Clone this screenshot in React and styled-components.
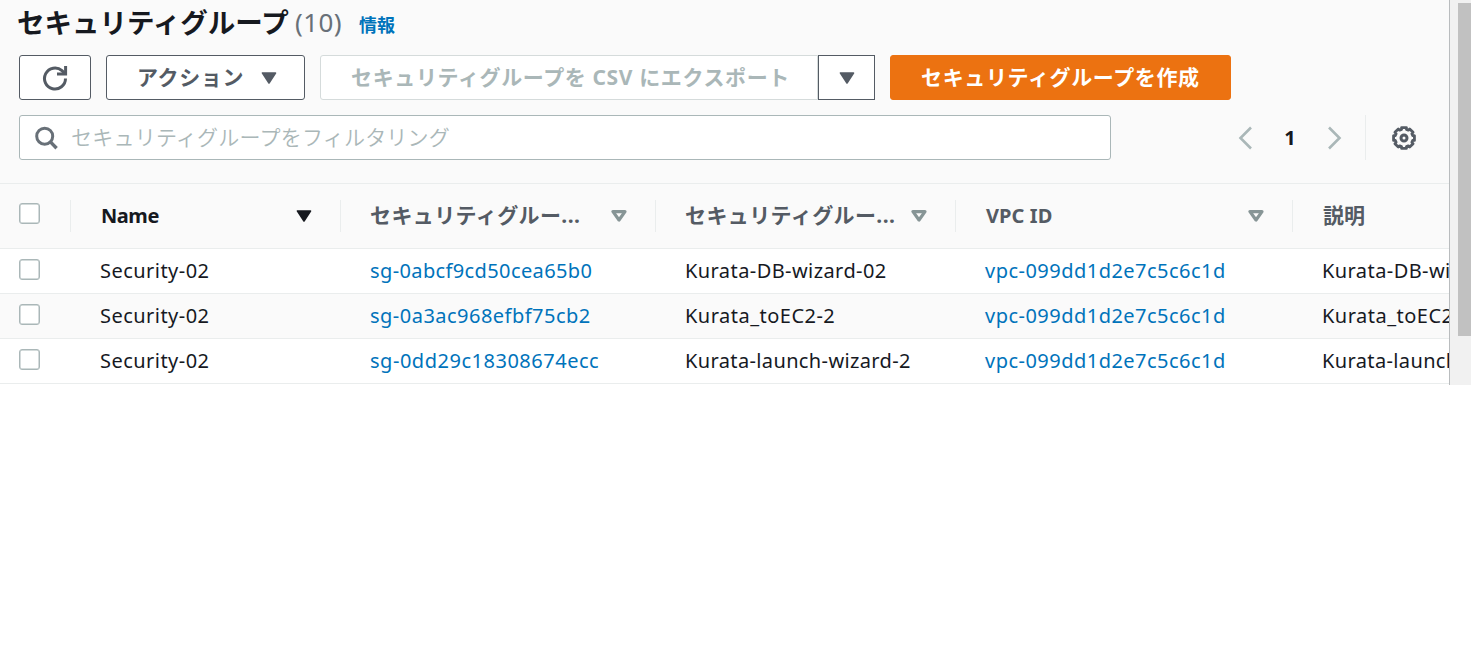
import React from "react";
import styled, { createGlobalStyle } from "styled-components";

const GlobalStyle = createGlobalStyle`
  *, *::before, *::after { box-sizing: border-box; }
  body {
    margin: 0;
    background: #fff;
    color: #16191f;
    font-family: "Noto Sans", "Noto Sans CJK JP", sans-serif;
    font-size: 20px;
    line-height: 30px;
    overflow: hidden;
  }
`;

const Viewport = styled.div`
  display: flex;
  width: 1471px;
  height: 385px;
  overflow: hidden;
`;

const Panel = styled.main`
  display: flex;
  flex-direction: column;
  width: 1450px;
  height: 385px;
  flex: none;
  overflow: hidden;
  background: #fff;
  border-right: 1px solid #b9bcbe;
`;

const Scrollbar = styled.div`
  width: 21px;
  height: 385px;
  padding: 3px 0 0 8px;
  background: #f1f1f1;
`;

const Thumb = styled.div`
  width: 13px;
  height: 333px;
  background: #c1c1c1;
`;

const PanelHeader = styled.header`
  display: flex;
  flex-direction: column;
  flex: none;
  height: 184px;
  padding: 0 19px;
  background: #fafafa;
  border-bottom: 1px solid #eaeded;
`;

const TitleRow = styled.div`
  display: flex;
  height: 55px;
  white-space: nowrap;
`;

const Title = styled.h1`
  margin: 0 0 0 -2px;
  width: 278px;
  padding-top: 1px;
  font: 700 27.5px/40px "Noto Sans CJK JP", sans-serif;
`;

const Count = styled.span`
  width: 64px;
  padding-top: 2px;
  color: #687078;
  font-size: 26px;
  line-height: 40px;
  letter-spacing: 0.4px;
`;

const InfoLink = styled.a`
  padding-top: 9px;
  color: #0073bb;
  font: 700 18px/30px "Noto Sans CJK JP", sans-serif;
`;

const ButtonRow = styled.div`
  display: flex;
  height: 60px;
  gap: 15px;
`;

const Button = styled.button`
  display: flex;
  align-items: center;
  justify-content: ${(p) => (p.$center ? "center" : "flex-start")};
  flex: none;
  gap: 17px;
  width: ${(p) => p.$width}px;
  height: 45px;
  margin: 0;
  padding: 0 0 0 ${(p) => (p.$center ? 0 : 30)}px;
  border: 1px solid ${(p) => (p.$primary ? "#ec7211" : p.$disabled ? "#d5dbdb" : "#545b64")};
  border-radius: ${(p) => p.$radius ?? "3px"};
  background: ${(p) => (p.$primary ? "#ec7211" : "#fff")};
  color: ${(p) => (p.$primary ? "#fff" : p.$disabled ? "#aab7b8" : "#545b64")};
  font: 700 21px/30px "Noto Sans", "Noto Sans CJK JP", sans-serif;
  letter-spacing: 0.63px;
  white-space: nowrap;
`;

const ButtonLabel = styled.span`
  padding-bottom: 2px;
`;

const SplitButton = styled.div`
  display: flex;
`;

const ToolRow = styled.div`
  display: flex;
  align-items: center;
  height: 45px;
`;

const SearchBox = styled.div`
  display: flex;
  align-items: center;
  gap: 13px;
  width: 1092px;
  height: 45px;
  padding-left: 15px;
  background: #fff;
  border: 1px solid #aab7b8;
  border-radius: 3px;
`;

const Placeholder = styled.span`
  padding-bottom: 4px;
  color: #aab7b8;
  font: 350 21px/30px "Noto Sans CJK JP", sans-serif;
  letter-spacing: 0.22px;
`;

const Pagination = styled.nav`
  display: flex;
  align-items: center;
  justify-content: space-between;
  width: 104px;
  margin-left: 127px;
`;

const PageNumber = styled.span`
  font-weight: 700;
  font-size: 20px;
`;

const Settings = styled.div`
  display: flex;
  align-items: center;
  height: 45px;
  margin-left: 23px;
  padding-left: 25px;
  border-left: 1px solid #eaeded;
`;

const Row = styled.div`
  display: grid;
  grid-template-columns: 71px 270px 315px 300px 337px 156px;
  align-items: center;
  flex: none;
  height: ${(p) => (p.$head ? 65 : 45)}px;
  background: ${(p) => (p.$shaded ? "#fafafa" : "#fff")};
  border-bottom: 1px solid #eaeded;
`;

const CheckCell = styled.div`
  display: flex;
  align-items: center;
  height: 32px;
  padding: 0 0 ${(p) => (p.$head ? 5 : 3)}px 19px;
  border-right: 1px solid ${(p) => (p.$head ? "#eaeded" : "transparent")};
`;

const Checkbox = styled.span`
  width: 21px;
  height: 21px;
  border: 1.5px solid #aab7b8;
  border-radius: 3px;
  background: #fff;
  box-shadow: inset 0 0 0 0.5px #aab7b8;
`;

const HeadCell = styled.div`
  display: flex;
  align-items: center;
  justify-content: space-between;
  height: 32px;
  padding: 0 28px 0 ${(p) => (p.$latin ? 30 : 29)}px;
  color: ${(p) => (p.$active ? "#16191f" : "#545b64")};
  border-right: 1px solid ${(p) => (p.$last ? "transparent" : "#eaeded")};
  font-weight: 700;
  white-space: nowrap;
`;

const HeadLabel = styled.span`
  padding-bottom: ${(p) => (p.$latin ? 0 : 3)}px;
  font-size: ${(p) => (p.$latin ? 20 : 21)}px;
  letter-spacing: ${(p) => p.$track ?? 0.4}px;
`;

const Cell = styled.div`
  padding-left: 29px;
  color: ${(p) => (p.$link ? "#0073bb" : "#16191f")};
  font-size: 20px;
  letter-spacing: ${(p) => p.$track}px;
  white-space: nowrap;
`;

const Icon = styled.svg`
  display: block;
  flex: none;
`;

const Caret = ({ hollow, color }) => (
  <Icon width="16" height="12" viewBox="0 0 16 12">
    {hollow ? (
      <path d="M2 1.6h12L8 10z" fill="none" stroke={color} strokeWidth="3.2" strokeLinejoin="round" />
    ) : (
      <path d="M1.5 1h13L8 11z" fill={color} stroke={color} strokeWidth="1.6" strokeLinejoin="round" />
    )}
  </Icon>
);

const RefreshIcon = () => (
  <Icon width="26" height="26" viewBox="0 0 26 26" fill="none" stroke="#545b64" strokeWidth="3">
    <path d="M23.5 13.5A10.5 10.5 0 1 1 20 5.7L22.6 8.3" />
    <path d="M23.6 1v8h-8.6" />
  </Icon>
);

const SearchIcon = () => (
  <Icon width="23" height="25" viewBox="0 0 23 25" fill="none" stroke="#687078" strokeWidth="3">
    <circle cx="9.7" cy="11.2" r="8" />
    <path d="M15.4 16.9l6.2 6.4" strokeWidth="3.4" />
  </Icon>
);

const Chevron = ({ d }) => (
  <Icon width="15" height="24" viewBox="0 0 15 24" fill="none" stroke="#aab7b8" strokeWidth="2.6">
    <path d={d} />
  </Icon>
);

const gearOutline = Array.from({ length: 8 }, (_, i) =>
  [[-13, 10.7], [13, 10.7], [16, 9], [29, 9]].map(([offset, radius]) => {
    const angle = ((i * 45 + offset - 90) * Math.PI) / 180;
    return `${(13 + radius * Math.cos(angle)).toFixed(2)},${(13 + radius * Math.sin(angle)).toFixed(2)}`;
  }).join(" ")
).join(" ");

const GearIcon = () => (
  <Icon width="26" height="26" viewBox="0 0 26 26" fill="none" stroke="#545b64" strokeWidth="2.8" strokeLinejoin="round">
    <polygon points={gearOutline} />
    <circle cx="13" cy="13" r="3" strokeWidth="3" />
  </Icon>
);

const columns = [
  { label: "Name", latin: true, active: true, track: -0.45 },
  { label: "セキュリティグルー..." },
  { label: "セキュリティグルー..." },
  { label: "VPC ID", latin: true, track: 0.1 },
  { label: "説明", last: true, latin: false, track: 0 },
];

const securityGroups = [
  {
    name: "Security-02",
    id: { text: "sg-0abcf9cd50cea65b0", track: 0.38 },
    group: { text: "Kurata-DB-wizard-02", track: 0.42 },
    vpc: "vpc-099dd1d2e7c5c6c1d",
  },
  {
    name: "Security-02",
    id: { text: "sg-0a3ac968efbf75cb2", track: 0.48 },
    group: { text: "Kurata_toEC2-2", track: 0.48 },
    vpc: "vpc-099dd1d2e7c5c6c1d",
  },
  {
    name: "Security-02",
    id: { text: "sg-0dd29c18308674ecc", track: 0.52 },
    group: { text: "Kurata-launch-wizard-2", track: 0.37 },
    vpc: "vpc-099dd1d2e7c5c6c1d",
  },
];

export default function App() {
  return (
    <>
      <GlobalStyle />
      <Viewport>
        <Panel>
          <PanelHeader>
            <TitleRow>
              <Title>セキュリティグループ</Title>
              <Count>(10)</Count>
              <InfoLink>情報</InfoLink>
            </TitleRow>
            <ButtonRow>
              <Button $width={72} $center><RefreshIcon /></Button>
              <Button $width={199}><ButtonLabel>アクション</ButtonLabel><Caret color="#545b64" /></Button>
              <SplitButton>
                <Button $width={498} $disabled $radius="3px 0 0 3px">
                  <ButtonLabel>セキュリティグループを CSV にエクスポート</ButtonLabel>
                </Button>
                <Button $width={57} $center $radius="0"><Caret color="#545b64" /></Button>
              </SplitButton>
              <Button $width={341} $primary><ButtonLabel>セキュリティグループを作成</ButtonLabel></Button>
            </ButtonRow>
            <ToolRow>
              <SearchBox>
                <SearchIcon />
                <Placeholder>セキュリティグループをフィルタリング</Placeholder>
              </SearchBox>
              <Pagination>
                <Chevron d="M13 1.5L2.5 12 13 22.5" />
                <PageNumber>1</PageNumber>
                <Chevron d="M2 1.5L12.5 12 2 22.5" />
              </Pagination>
              <Settings><GearIcon /></Settings>
            </ToolRow>
          </PanelHeader>
          <Row $head $shaded>
            <CheckCell $head><Checkbox /></CheckCell>
            {columns.map((c, i) => (
              <HeadCell key={i} $active={c.active} $last={c.last} $latin={c.latin || c.last}>
                <HeadLabel $latin={c.latin} $track={c.track}>{c.label}</HeadLabel>
                {!c.last && <Caret hollow={!c.active} color={c.active ? "#16191f" : "#879596"} />}
              </HeadCell>
            ))}
          </Row>
          {securityGroups.map((g, i) => (
            <Row key={g.id.text} $shaded={i % 2 === 1}>
              <CheckCell><Checkbox /></CheckCell>
              <Cell $track={0.46}>{g.name}</Cell>
              <Cell $link $track={g.id.track}>{g.id.text}</Cell>
              <Cell $track={g.group.track}>{g.group.text}</Cell>
              <Cell $link $track={0.48}>{g.vpc}</Cell>
              <Cell $track={g.group.track}>{g.group.text}</Cell>
            </Row>
          ))}
        </Panel>
        <Scrollbar><Thumb /></Scrollbar>
      </Viewport>
    </>
  );
}
